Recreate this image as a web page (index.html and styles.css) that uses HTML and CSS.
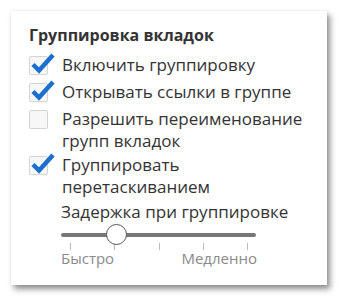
FILE: index.html
```html
<!DOCTYPE html>
<html lang="ru">
<head>
<meta charset="utf-8">
<link rel="stylesheet" href="styles.css">
</head>
<body>
<div class="card">
  <div class="title">Группировка вкладок</div>
  <div class="row">
    <span class="box checked"><svg class="tick" viewBox="0 0 26 24" width="26" height="24"><path d="M3 12.5 L9 18.5 L23 3" /></svg></span>
    <span class="label">Включить группировку</span>
  </div>
  <div class="row">
    <span class="box checked"><svg class="tick" viewBox="0 0 26 24" width="26" height="24"><path d="M3 12.5 L9 18.5 L23 3" /></svg></span>
    <span class="label">Открывать ссылки в группе</span>
  </div>
  <div class="row row-tight">
    <span class="box"></span>
    <span class="label">Разрешить переименование<br>групп вкладок</span>
  </div>
  <div class="row row-last">
    <span class="box checked"><svg class="tick" viewBox="0 0 26 24" width="26" height="24"><path d="M3 12.5 L9 18.5 L23 3" /></svg></span>
    <span class="label">Группировать<br>перетаскиванием</span>
  </div>
  <div class="sub">
    <div class="label">Задержка при группировке</div>
    <div class="slider">
      <div class="track"></div>
      <div class="thumb"></div>
    </div>
    <div class="ticks"><i></i><i></i><i></i><i></i><i></i></div>
    <div class="ends"><span>Быстро</span><span>Медленно</span></div>
  </div>
</div>
</body>
</html>
```
FILE: styles.css
```css
html, body { margin: 0; padding: 0; background: #fff; }
body { font-family: "Open Sans", "Noto Sans", sans-serif; color: #333; }
.card {
  margin: 11px;
  width: 316px;
  height: 274px;
  box-sizing: border-box;
  background: #fff;
  box-shadow: 3px 4px 6px rgba(0,0,0,0.45), 0 0 2px rgba(0,0,0,0.08);
  padding: 13px 18px 0 18px;
  display: flex;
  flex-direction: column;
}
.title { font-weight: 700; font-size: 16px; line-height: 22px; color: #333; margin-bottom: 8px; }
.row { display: flex; align-items: flex-start; margin-bottom: 5px; }
.row-tight { margin-bottom: 2px; }
.row-last { margin-bottom: 3px; }
.label { font-size: 17px; line-height: 22px; color: #333; }
.box {
  position: relative;
  flex: none;
  width: 17px; height: 17px;
  margin-top: 2px;
  margin-right: 14px;
  border: 1px solid #d4d4d4;
  border-radius: 2px;
  background: #f7f7f7;
}
.tick { position: absolute; left: 0; top: -5px; }
.tick path { fill: none; stroke: #1a6fcf; stroke-width: 4.5; stroke-linecap: butt; stroke-linejoin: miter; }
.sub { margin-left: 32px; display: flex; flex-direction: column; }
.slider { position: relative; height: 21px; width: 195px; margin-top: 1px; display: flex; align-items: center; }
.track { width: 195px; height: 4px; border-radius: 2px; background: #777; }
.thumb {
  position: absolute; left: 45px; top: 0;
  width: 19px; height: 19px; border-radius: 50%;
  background: #fff; border: 1px solid #555;
}
.ticks { display: flex; justify-content: space-between; width: 178px; margin-left: 9px; height: 7px; margin-top: -2px; }
.ticks i { width: 1px; height: 7px; background: #bbb; }
.ends { display: flex; justify-content: space-between; width: 196px; font-size: 15px; line-height: 17px; color: #8a8a8a; }
```
